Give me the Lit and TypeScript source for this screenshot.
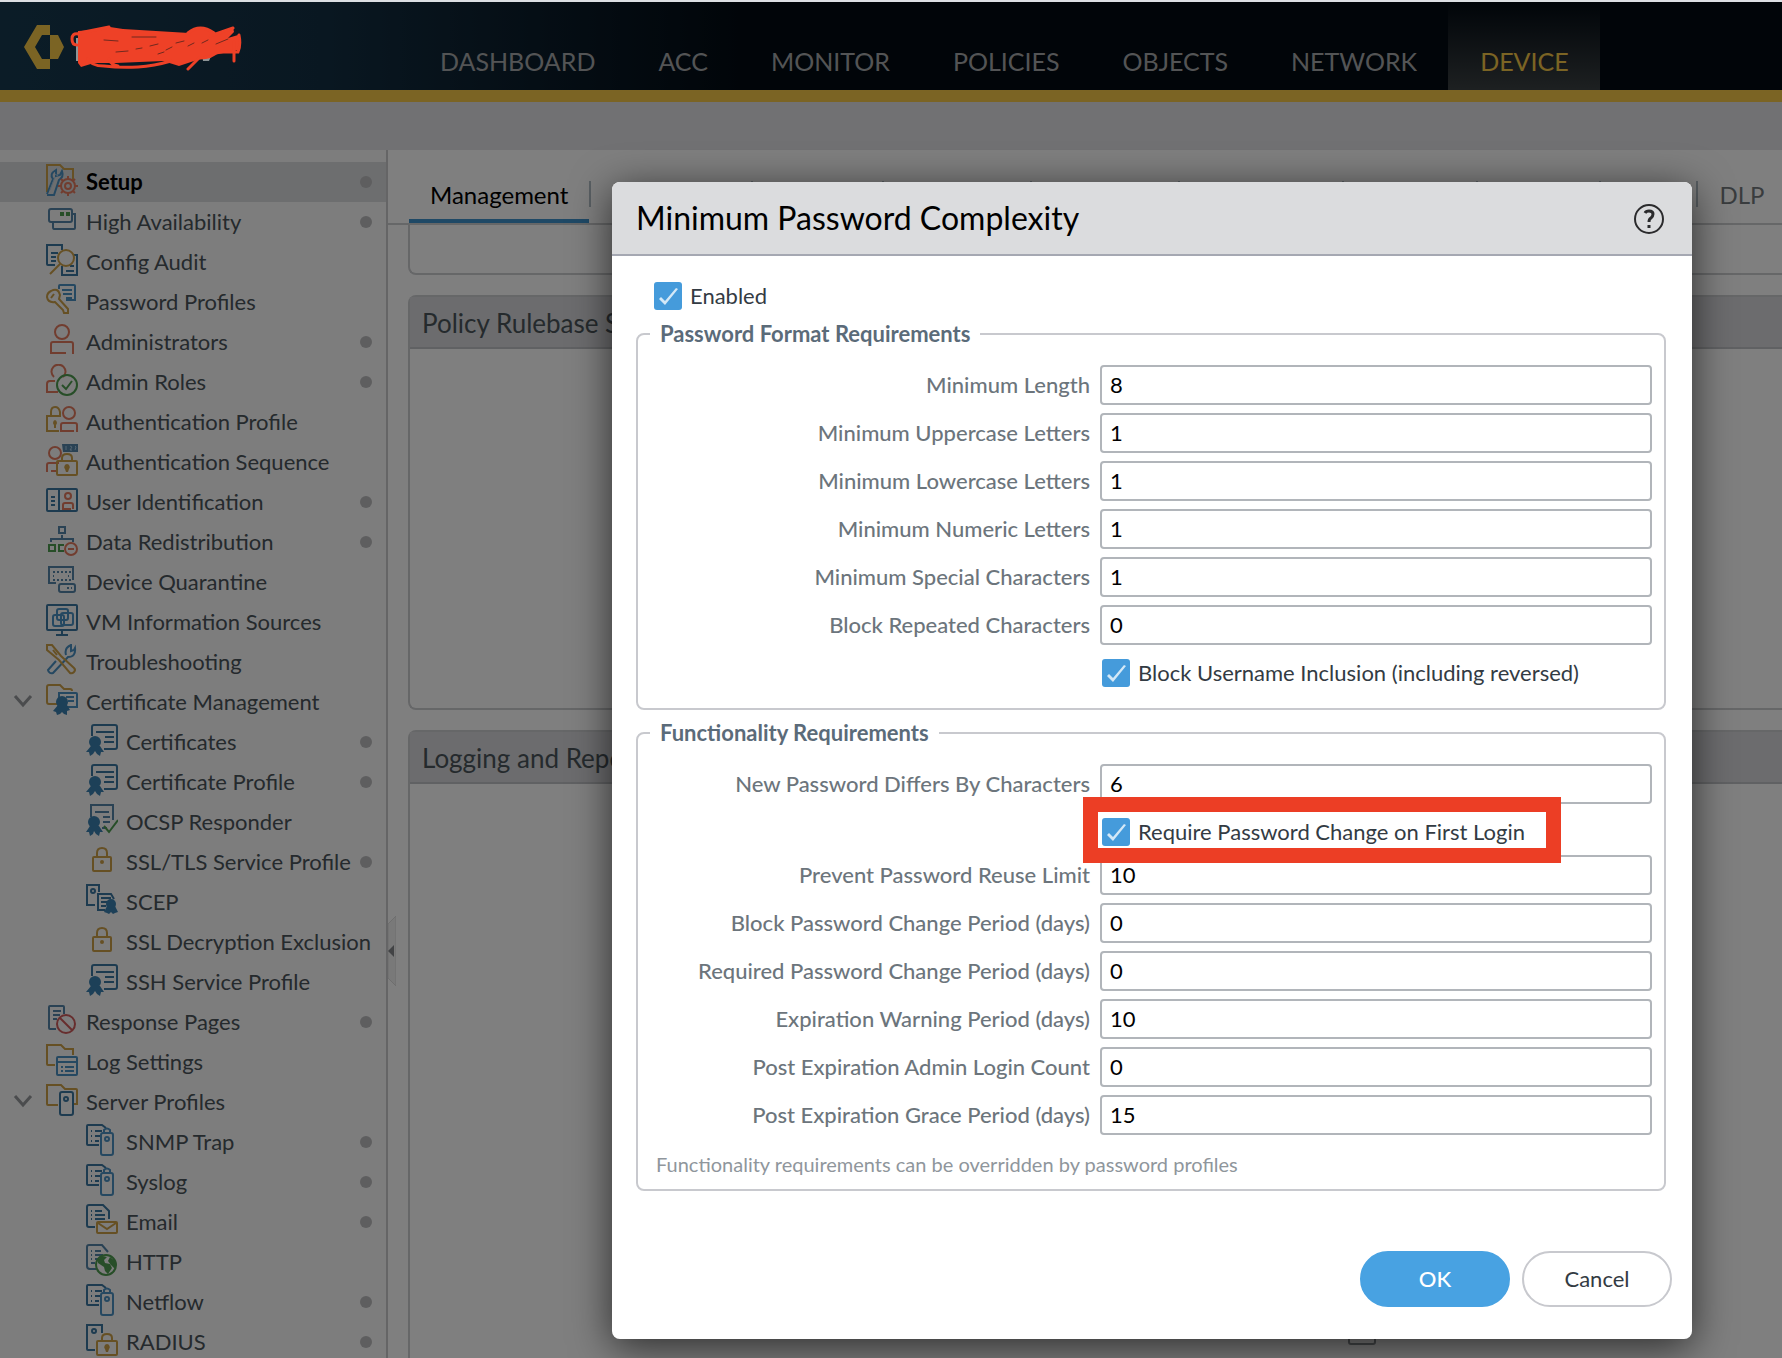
import { LitElement, html, css, svg, nothing } from "lit";
import { customElement, property, state } from "lit/decorators.js";
import { classMap } from "lit/directives/class-map.js";

const certificate = svg`
  <g class="navy"><path d="M6 12V3q0-2 2-2h21q2 0 2 2v20q0 2-2 2H18" /><path d="M10 8h18M19 13h9M18 18h10" /></g>
  <circle class="seal" cx="9" cy="18" r="6" /><path class="seal" d="M5 22l-5 6h3l1 4 3-2 2-3 2 3 3 2 1-4h3l-4-6z" />`;

const listServer = svg`
  <g class="navy"><path d="M13 21H2q-1 0-1-1V2q0-1 1-1h14l4 3" /><path d="M9 7h7M9 12h6M9 17h4" /><path d="M5 7h1M5 12h1M5 17h1" /></g>
  <g class="blue"><path d="M18 9V6q3-3 6 0v3" /><rect x="15" y="9" width="12" height="22" rx="2" /><circle cx="21" cy="15" r="2" /></g>`;

const padlock = svg`
  <g class="gold"><rect x="7" y="13" width="18" height="14" rx="1" /><path d="M11 13V9q0-5 5-5t5 5v4" /></g>
  <circle class="gold-fill" cx="16" cy="18" r="2" />`;

const keyLock = svg`
  <g class="gold"><rect x="11" y="17" width="20" height="14" rx="1" /><path d="M16 17v-3q0-4 5-4t5 4v3" /></g>
  <path class="gold-fill" d="M21 20a3 3 0 0 1 2 5l-1 3h-2l-1-3a3 3 0 0 1 2-5z" />`;

const icons: Record<string, unknown> = {
  setup: svg`
    <path class="gold" d="M1 28V1h13l4 4h9v11" />
    <path class="blue" d="M1 30l6-15q-4-5 3-9v6l4-1 2-4q2 6-3 9L8 31H1" />
    <path class="wash" d="M9 10l3 2M4 26l5-13" />
    <g class="red"><circle cx="22" cy="22" r="7" /><circle cx="22" cy="22" r="3" /><path d="M22 12v3M22 29v3M12 22h3M29 22h3M15 15l2 2M27 27l2 2M15 29l2-2M27 17l2-2" /></g>`,
  ha: svg`
    <g class="steel"><rect x="3" y="5" width="23" height="13" rx="2" /><path d="M26 10h3v14q0 1-1 1H8q-1 0-1-2v-5" /></g>
    <path class="green-fill" d="M14 8h4v4h-4zM20 8h4v4h-4z" />`,
  audit: svg`
    <g class="navy"><path d="M9 21H2q-1 0-1-1V1h15v5" /><path d="M5 9h7M5 13h5M5 17h5" /><path d="M27 11h4v20H16v-9M20 27h8M24 22h4" /></g>
    <g class="gold"><circle cx="20" cy="14" r="8" /><path d="M14 20L4 30" /></g>`,
  password: svg`
    <g class="blue"><path d="M13 5V2q0-1 1-1h14q1 0 1 1v14h-9" /><path d="M16 6h10M17 10h9M20 14h6" /></g>
    <path class="gold" d="M5 7q7-4 9 4l-1 4 9 10v4h-4l-1-3-8-8q-7 1-8-5 0-4 4-6zM5 14l3-4" />`,
  admin: svg`<g class="red"><circle cx="16" cy="8" r="7" /><path d="M20 29H5v-9q0-2 2-2h18q2 0 2 2v10" /></g>`,
  roles: svg`
    <g class="red"><path d="M17 13A7 7 0 1 0 8 13M9 17H4q-3 0-3 3v8h11" /></g>
    <g class="green"><circle cx="21" cy="21" r="10" /><path d="M16 21l4 4 6-8" /></g>`,
  authProfile: svg`
    <g class="gold"><path d="M13 27H1V12h14M5 12V8q0-5 4-5t5 5v3" /></g>
    <path class="gold-fill" d="M9 16a3 3 0 0 1 1 5v3H8v-3a3 3 0 0 1 1-5z" />
    <g class="red"><circle cx="23" cy="9" r="6" /><path d="M15 28v-7q0-2 2-2h12q2 0 2 2v7M16 27h12" /></g>`,
  authSequence: svg`
    <g class="red"><circle cx="9" cy="9" r="6" /><path d="M1 28v-7q0-2 2-2h10M5 27h7" /></g>
    <path class="steel-fill" d="M16 0h16v8H17z" /><path class="wash" d="M20 2v4M24 2l2 1-2 3h2M29 2l1 1-1 3" />
    ${keyLock}`,
  userId: svg`
    <g class="navy"><rect x="1" y="5" width="30" height="22" rx="1" /><path d="M13 5v22M5 13h4M5 17h4M5 21h4" /></g>
    <g class="red"><circle cx="22" cy="12" r="3" /><path d="M25 25h-8v-4q0-2 2-2h6q2 0 2 2v4" /></g>`,
  redistribution: svg`
    <g class="steel"><rect x="13" y="3" width="6" height="6" /><path d="M5 18v-3h22v3M16 11v4" /></g>
    <g class="green"><rect x="3" y="21" width="6" height="6" /><path d="M18 21h-5v6h5" /></g>
    <g class="red"><circle cx="25" cy="25" r="6" /><path d="M22 25h6" /></g>`,
  quarantine: svg`
    <g class="steel"><path d="M10 19H3V3h24v13" /><rect x="13" y="20" width="16" height="8" rx="2" /></g>
    <path class="steel dots" d="M7 8h18M7 12h1M22 12h1M7 16h18M21 24h5" />`,
  vm: svg`
    <g class="navy"><rect x="1" y="1" width="30" height="25" rx="1" /><path d="M16 26v4M10 31h12" /></g>
    <g class="blue"><rect x="11" y="5" width="11" height="11" rx="2" /><rect x="7" y="11" width="11" height="11" rx="2" /><rect x="15" y="9" width="12" height="12" rx="2" /></g>`,
  trouble: svg`
    <path class="blue" d="M20 11q-2-7 5-10v6l3-1 1-2q1 9-7 9L7 29q-4 1-5-3l8-9" />
    <path class="gold" d="M1 1h5l9 11 13 12q2 2 0 4t-4 1L13 16 1 6zM7 6l4 5" />`,
  certFolder: svg`
    <path class="gold" d="M11 20H3q-2 0-2-2V3q0-2 2-2h11l4 4h6q2 0 2 2" />
    <g class="blue"><path d="M13 14V9h17q1 0 1 1v13H21M20 13h8M22 17h6" /></g>
    <circle class="seal" cx="16" cy="18" r="6" /><path class="seal" d="M12 21l-5 6 3 1 1 3 3-1 2-2 2 2 3 1 0-4 3-1-3-5z" />`,
  cert: certificate,
  ocsp: svg`
    <g class="steel"><path d="M5 13V1h22v15M21 24h-5" /><path d="M9 8h14M17 13h7M17 18h7" /></g>
    <circle class="seal" cx="8" cy="18" r="6" /><path class="seal" d="M4 22l-4 6h3l1 4 3-2 1-3 2 3 3 2 1-4h3l-4-6z" />
    <path class="green" d="M18 22l5 6 9-12" />`,
  lock: padlock,
  scep: svg`
    <g class="navy"><path d="M9 21H1V1h12v7" /><circle cx="7" cy="7" r="2" /><path d="M19 26h-7V10h13l3 5M15 14h10M15 18h8M15 22h5" /></g>
    <circle class="seal" cx="25" cy="20" r="5" /><path class="seal" d="M21 22l-3 6 3 1 2 1 2-2 2 2 2-1 3-1-3-6z" />`,
  response: svg`
    <g class="steel"><path d="M10 25H4q-1 0-1-1V3q0-1 1-1h13q1 0 1 1v7" /><path d="M7 7h8M7 11h7M7 15h4" /></g>
    <g class="crimson"><circle cx="20" cy="20" r="9" /><path d="M14 14l12 12" /></g>`,
  log: svg`
    <path class="gold" d="M9 21H2q-1 0-1-1V1h14l4 4h8v6" />
    <g class="blue"><rect x="11" y="13" width="20" height="18" rx="1" /><path d="M11 18h20M15 23h2M19 23h9M15 27h2M19 27h9" /></g>`,
  serverFolder: svg`
    <path class="gold" d="M12 21H2q-1 0-1-1V1h14l4 4h11q1 0 1 1v14h-3" />
    <g class="navy"><rect x="14" y="8" width="13" height="23" rx="2" /><circle cx="20" cy="15" r="2" /></g>`,
  listServer,
  email: svg`
    <g class="navy"><path d="M9 23H3q-2 0-2-2V3q0-2 2-2h14l6 6v8" /><path d="M9 7h7M9 11h10M9 15h10M5 7h1M5 11h1M5 15h1" /></g>
    <g class="gold"><rect x="11" y="18" width="20" height="11" rx="1" /><path d="M12 19l9 6 9-6" /></g>`,
  http: svg`
    <g class="steel"><path d="M10 25H4q-3 0-3-3V3q0-2 2-2h13l6 7" /><path d="M9 7h6M9 11h8M9 15h3M5 7h1M5 11h1M5 15h1M5 19h4" /></g>
    <circle class="green" cx="20" cy="21" r="10" />
    <path class="green-fill" d="M12 16l4-4 5 1-3 3 1 3 5 1 2 4-4 6-3-3-1-4-6-4zM24 13l5 4v8l-4-4-3-4z" />`,
  radius: svg`
    <g class="navy"><path d="M9 26H2q-1 0-1-1V1h15v8" /><circle cx="8" cy="7" r="2" /></g>
    ${keyLock}`,
};

interface NavEntry {
  label: string;
  icon: string;
  child?: boolean;
  dot?: boolean;
  open?: boolean;
}

const entries: NavEntry[] = [
  { label: "Setup", icon: "setup", dot: true },
  { label: "High Availability", icon: "ha", dot: true },
  { label: "Config Audit", icon: "audit" },
  { label: "Password Profiles", icon: "password" },
  { label: "Administrators", icon: "admin", dot: true },
  { label: "Admin Roles", icon: "roles", dot: true },
  { label: "Authentication Profile", icon: "authProfile" },
  { label: "Authentication Sequence", icon: "authSequence" },
  { label: "User Identification", icon: "userId", dot: true },
  { label: "Data Redistribution", icon: "redistribution", dot: true },
  { label: "Device Quarantine", icon: "quarantine" },
  { label: "VM Information Sources", icon: "vm" },
  { label: "Troubleshooting", icon: "trouble" },
  { label: "Certificate Management", icon: "certFolder", open: true },
  { label: "Certificates", icon: "cert", child: true, dot: true },
  { label: "Certificate Profile", icon: "cert", child: true, dot: true },
  { label: "OCSP Responder", icon: "ocsp", child: true },
  { label: "SSL/TLS Service Profile", icon: "lock", child: true, dot: true },
  { label: "SCEP", icon: "scep", child: true },
  { label: "SSL Decryption Exclusion", icon: "lock", child: true },
  { label: "SSH Service Profile", icon: "cert", child: true },
  { label: "Response Pages", icon: "response", dot: true },
  { label: "Log Settings", icon: "log" },
  { label: "Server Profiles", icon: "serverFolder", open: true },
  { label: "SNMP Trap", icon: "listServer", child: true, dot: true },
  { label: "Syslog", icon: "listServer", child: true, dot: true },
  { label: "Email", icon: "email", child: true, dot: true },
  { label: "HTTP", icon: "http", child: true },
  { label: "Netflow", icon: "listServer", child: true, dot: true },
  { label: "RADIUS", icon: "radius", child: true, dot: true },
];

@customElement("top-nav")
class TopNav extends LitElement {
  static styles = css`
    :host { display: block; }
    .bar {
      display: flex; height: 88px; border-bottom: 12px solid #f7c948;
      background: linear-gradient(90deg, #16394f 0, #132f43 18%, #020a12 42%, #020a12 100%);
    }
    .brand { flex: none; width: 408px; padding: 22px 0 0 24px; box-sizing: border-box; }
    .links { display: flex; }
    .link {
      display: flex; align-items: flex-end; padding: 0 31px 13px 32px;
      font-size: 25px; line-height: 32px; color: #a7a9ab; text-decoration: none;
    }
    .current { color: #f7c948; background: linear-gradient(#020a12, #3b4143); }
  `;
  render() {
    const links = ["DASHBOARD", "ACC", "MONITOR", "POLICIES", "OBJECTS", "NETWORK", "DEVICE"];
    return html`<header class="bar">
      <div class="brand">
        <svg width="40" height="46" viewBox="0 0 40 46" aria-hidden="true">
          <path fill="#f7c948" d="M13 1h13v10h-8l-7 12 7 12h8v10H13L0 23zM26 11h8l6 12-6 12h-8z" />
        </svg>
      </div>
      <nav class="links">
        ${links.map((l) => html`<a href="#" class=${classMap({ link: true, current: l === "DEVICE" })}>${l}</a>`)}
      </nav>
    </header>`;
  }
}

@customElement("side-nav")
class SideNav extends LitElement {
  static styles = css`
    :host { display: block; }
    .list { margin: 0; padding: 12px 0 0; list-style: none; }
    .item {
      display: flex; align-items: center; height: 40px; padding: 0 14px 0 12px;
      color: #4b545b; font-size: 22px; line-height: 28px; text-decoration: none; white-space: nowrap;
    }
    .twisty { flex: none; width: 22px; height: 16px; margin-right: 12px; }
    .child .twisty { margin-right: 52px; }
    .glyph { flex: none; margin: 0 8px 4px 0; fill: none; stroke-width: 2; }
    .label { flex: 1; }
    .dot { flex: none; width: 12px; height: 12px; border-radius: 50%; background: #bcbcbe; }
    .selected { background: #dadcdf; color: #000; font-weight: 700; }
    .chevron { fill: none; stroke: #96999c; stroke-width: 3; }
    .navy { stroke: #3a76a0; }
    .blue { stroke: #4a90c2; }
    .steel { stroke: #5484a8; }
    .steel-fill { fill: #5484a8; }
    .seal { fill: #3a80b0; }
    .gold { stroke: #cda048; }
    .gold-fill { fill: #cda048; }
    .red { stroke: #e37a5e; }
    .crimson { stroke: #cf5c5c; }
    .green { stroke: #4f9c50; }
    .green-fill { fill: #4f9c50; }
    .wash { stroke: #a9cbe4; stroke-width: 1; }
    .dots { stroke-dasharray: 2 2; }
  `;
  render() {
    return html`<nav aria-label="Device"><ul class="list">
      ${entries.map((e, i) => html`<li>
        <a href="#" class=${classMap({ item: true, child: !!e.child, selected: i === 0 })}>
          <svg class="twisty" viewBox="0 0 22 16" aria-hidden="true">
            ${e.open ? svg`<path class="chevron" d="M3 2l8 9 8-9" />` : nothing}
          </svg>
          <svg class="glyph" width="32" height="32" viewBox="0 0 32 32" aria-hidden="true">${icons[e.icon]}</svg>
          <span class="label">${e.label}</span>
          ${e.dot ? html`<span class="dot"></span>` : nothing}
        </a></li>`)}
    </ul></nav>`;
  }
}

@customElement("setup-panels")
class SetupPanels extends LitElement {
  static styles = css`
    :host { display: block; min-width: 0; overflow: hidden; }
    .tabs { display: flex; height: 73px; padding-left: 21px; border-bottom: 2px solid #cdced1; }
    .tab {
      display: flex; flex: none; align-items: center; padding: 16px 0 0; border: 0; background: none;
      font: inherit; font-size: 24px; line-height: 28px; color: #73797d;
    }
    .text { padding: 0 21px; }
    .rule { flex: none; width: 2px; height: 26px; margin-top: 31px; background: #b3bec6; }
    .active { color: #000; border-bottom: 4px solid #3f93cd; padding-top: 20px; }
    .stack { display: flex; flex-direction: column; gap: 20px; padding: 0 0 0 20px; }
    .panel { border: 2px solid #cdced1; border-right: 0; border-radius: 8px 0 0 8px; }
    .rest { height: 48px; border-top: 0; border-radius: 0 0 0 8px; }
    .title {
      margin: 0; padding: 10px 12px 8px; border-bottom: 2px solid #c0c2c6; background: #d8d9dc;
      font-size: 26px; line-height: 32px; font-weight: 400; color: #4b545b;
    }
    .body { height: 359px; }
    .tall { height: 600px; }
    .option { padding: 533px 0 0 938px; }
    .box { width: 28px; height: 28px; margin: 0; appearance: none; border: 2px solid #8f9296; border-radius: 3px; }
  `;
  render() {
    const tabs = ["Operations", "Services", "Interfaces", "Telemetry", "Content-ID", "WildFire", "Session", "HSM", "DLP"];
    return html`
      <div class="tabs" role="tablist">
        <button class="tab active" role="tab" aria-selected="true"><span class="text">Management</span></button>
        ${tabs.map((t) => html`<span class="rule"></span><button class="tab" role="tab" aria-selected="false"><span class="text">${t}</span></button>`)}
      </div>
      <div class="stack">
        <section class="panel rest"></section>
        <section class="panel"><h2 class="title">Policy Rulebase Settings</h2><div class="body"></div></section>
        <section class="panel"><h2 class="title">Logging and Reporting Settings</h2>
          <div class="body tall"><div class="option"><input class="box" type="checkbox" aria-label="Log option" /></div></div>
        </section>
      </div>`;
  }
}

interface Field { id: string; label: string; value?: string; check?: boolean; marked?: boolean; }

const formatFields: Field[] = [
  { id: "len", label: "Minimum Length", value: "8" },
  { id: "upper", label: "Minimum Uppercase Letters", value: "1" },
  { id: "lower", label: "Minimum Lowercase Letters", value: "1" },
  { id: "numeric", label: "Minimum Numeric Letters", value: "1" },
  { id: "special", label: "Minimum Special Characters", value: "1" },
  { id: "repeat", label: "Block Repeated Characters", value: "0" },
  { id: "username", label: "Block Username Inclusion (including reversed)", check: true },
];

const functionFields: Field[] = [
  { id: "differs", label: "New Password Differs By Characters", value: "6" },
  { id: "first", label: "Require Password Change on First Login", check: true, marked: true },
  { id: "reuse", label: "Prevent Password Reuse Limit", value: "10" },
  { id: "block", label: "Block Password Change Period (days)", value: "0" },
  { id: "required", label: "Required Password Change Period (days)", value: "0" },
  { id: "warning", label: "Expiration Warning Period (days)", value: "10" },
  { id: "count", label: "Post Expiration Admin Login Count", value: "0" },
  { id: "grace", label: "Post Expiration Grace Period (days)", value: "15" },
];

@customElement("password-dialog")
class PasswordDialog extends LitElement {
  static styles = css`
    :host { display: block; }
    .dialog {
      overflow: hidden; border-radius: 8px; background: #fff; color: #333b43;
      font-size: 22px; line-height: 28px;
    }
    .head {
      display: flex; align-items: center; justify-content: space-between; height: 72px;
      padding: 0 28px 0 24px; border-bottom: 2px solid #a5a8b2; background: #dbdcde;
    }
    .title { margin: 0; font-size: 32px; line-height: 40px; font-weight: 400; color: #000; }
    .help { width: 30px; height: 30px; margin-top: 2px; padding: 0; border: 0; background: none; }
    .content { display: flex; flex-direction: column; gap: 11px; padding: 26px 26px 0 24px; }
    .enabled { display: flex; gap: 8px; padding-left: 18px; height: 29px; }
    .group {
      min-width: 0; margin: 0; padding: 19px 12px 20px; border: 2px solid #c8c9ce; border-radius: 8px;
      display: grid; row-gap: 8px;
    }
    .noted { padding-bottom: 4px; }
    .legend { padding: 0 10px; font-weight: 700; line-height: 24px; color: #5b6b79; }
    .row { display: grid; grid-template-columns: 440px 1fr; column-gap: 10px; align-items: center; }
    .name { text-align: right; font-weight: 500; color: #6c757c; white-space: nowrap; }
    .field {
      width: 100%; height: 40px; box-sizing: border-box; padding: 0 8px 2px; border: 2px solid #b1b5ba;
      border-radius: 4px; background: #fff; font: inherit; color: #000;
    }
    .option {
      position: relative; grid-column: 2; justify-self: start; display: flex; gap: 8px;
      height: 29px; padding: 6px 0 0 2px; white-space: nowrap;
    }
    .mark {
      position: absolute; inset: -15px -36px -16px -17px; border: 15px solid #ec3e25; pointer-events: none;
    }
    .check {
      flex: none; width: 28px; height: 28px; margin: 0; appearance: none; border-radius: 3px; background: #459bdb;
    }
    .check:checked::before {
      content: ""; display: block; width: 28px; height: 28px; background: #d3e8f7;
      clip-path: polygon(5px 17px, 7px 15px, 11px 19px, 22px 6px, 24px 7px, 11px 23px);
    }
    .note { margin: 0; padding-left: 6px; font-size: 20px; line-height: 42px; color: #8f969c; }
    .foot { display: flex; justify-content: flex-end; gap: 12px; padding: 60px 20px 32px; }
    .button {
      width: 150px; height: 56px; border: 2px solid #c8c9ce; border-radius: 28px; background: #fff;
      font: inherit; color: #333b43;
    }
    .primary { border-color: #48a2e2; background: #48a2e2; color: #fff; font-weight: 500; }
  `;

  @state() private enabled = true;

  private row(f: Field) {
    if (f.check) {
      return html`<div class="row"><div class="option">
        <input class="check" type="checkbox" id=${f.id} checked /><label for=${f.id}>${f.label}</label>
        ${f.marked ? html`<span class="mark"></span>` : nothing}
      </div></div>`;
    }
    return html`<div class="row">
      <label class="name" for=${f.id}>${f.label}</label>
      <input class="field" type="text" inputmode="numeric" id=${f.id} .value=${f.value ?? ""} />
    </div>`;
  }

  render() {
    return html`<section class="dialog" role="dialog" aria-labelledby="title">
      <header class="head">
        <h1 class="title" id="title">Minimum Password Complexity</h1>
        <button class="help" aria-label="Help">
          <svg width="30" height="30" viewBox="0 0 30 30" fill="none" stroke="#2b2b2d" aria-hidden="true">
            <circle cx="15" cy="15" r="14" stroke-width="2" />
            <path stroke-width="3" d="M11 9q1-2 4-2 4 0 4 3 0 2-2 4-2 1-2 4" /><path stroke-width="3" d="M15 21v3" />
          </svg>
        </button>
      </header>
      <div class="content">
        <div class="enabled">
          <input class="check" type="checkbox" id="enabled" .checked=${this.enabled}
            @change=${() => (this.enabled = !this.enabled)} />
          <label for="enabled">Enabled</label>
        </div>
        <fieldset class="group">
          <legend class="legend">Password Format Requirements</legend>
          ${formatFields.map((f) => this.row(f))}
        </fieldset>
        <fieldset class="group noted">
          <legend class="legend">Functionality Requirements</legend>
          ${functionFields.map((f) => this.row(f))}
          <p class="note">Functionality requirements can be overridden by password profiles</p>
        </fieldset>
      </div>
      <footer class="foot">
        <button class="button primary">OK</button>
        <button class="button">Cancel</button>
      </footer>
    </section>`;
  }
}

@customElement("app-root")
class AppRoot extends LitElement {
  static styles = css`
    :host {
      display: block; position: relative; height: 100vh; overflow: hidden; background: #fff;
      font-family: Lato, "Liberation Sans", sans-serif;
    }
    .page { display: flex; flex-direction: column; height: 100%; border-top: 2px solid #dcdfe3; box-sizing: border-box; }
    .strip { flex: none; height: 48px; background: #e2e3e6; }
    .main { display: grid; grid-template-columns: 388px 1fr; flex: 1; min-height: 0; }
    .side { border-right: 2px solid #cbcbcd; background: #fafafa; overflow: hidden; }
    .handle { position: absolute; left: 388px; top: 916px; }
    .shade { position: absolute; inset: 2px 0 0; background: rgba(0, 0, 0, 0.5); }
    .modal {
      position: absolute; left: 612px; right: 90px; top: 182px; border-radius: 8px;
      box-shadow: 0 8px 40px rgba(0, 0, 0, 0.65);
    }
    .scribble { position: absolute; left: 70px; top: 24px; }
  `;
  render() {
    return html`
      <div class="page">
        <top-nav></top-nav>
        <div class="strip"></div>
        <div class="main">
          <side-nav class="side"></side-nav>
          <setup-panels></setup-panels>
        </div>
      </div>
      <svg class="handle" width="8" height="70" viewBox="0 0 8 70" aria-hidden="true">
        <path d="M0 8L8 0v70L0 62z" fill="#f2f2f2" stroke="#dcdcdc" /><path d="M0 35l6-6v12z" fill="#84878a" />
      </svg>
      <div class="shade"></div>
      <svg class="scribble" width="174" height="48" viewBox="0 0 174 48" fill="none" aria-hidden="true">
        <path fill="#8d9496" d="M6 14h5v23H6zM28 32h10v4H28zM52 32h8v5h-8zM132 30h10l-3 7h-6z" />
        <path fill="#ee4127" d="M8 7l20-1 12-3 13 2 66 4q7-6 15-4 8 1 11 5l18-7 1 5-6 6 10-3 2 6-2 9-24 5-20 6-15 5-16-5-47 2-22 0-13 4-3-4z" />
        <g stroke="#ee4127" stroke-width="3" stroke-linecap="round">
          <path d="M8 10Q2 9 2 15q0 6 5 6M9 9l30-6M18 35q3 7 16 7 16 2 34 1 16-1 33-6M39 35q2 6 9 7M118 45l11-11M118 9q12-10 26 0M140 12l23-8M146 28h22q3-7 1-17M164 18v19M130 34q12 0 18-7" />
        </g>
        <path stroke="#70291f" stroke-linecap="round" d="M62 13l24 0M34 16l14 1M46 28l12-1M66 25l6-1M80 22l8-2M96 26l6-3M106 19l8-2M118 22l6-3M132 19l6-3M88 30l6-2M146 20l12-5" />
      </svg>
      <password-dialog class="modal"></password-dialog>`;
  }
}
